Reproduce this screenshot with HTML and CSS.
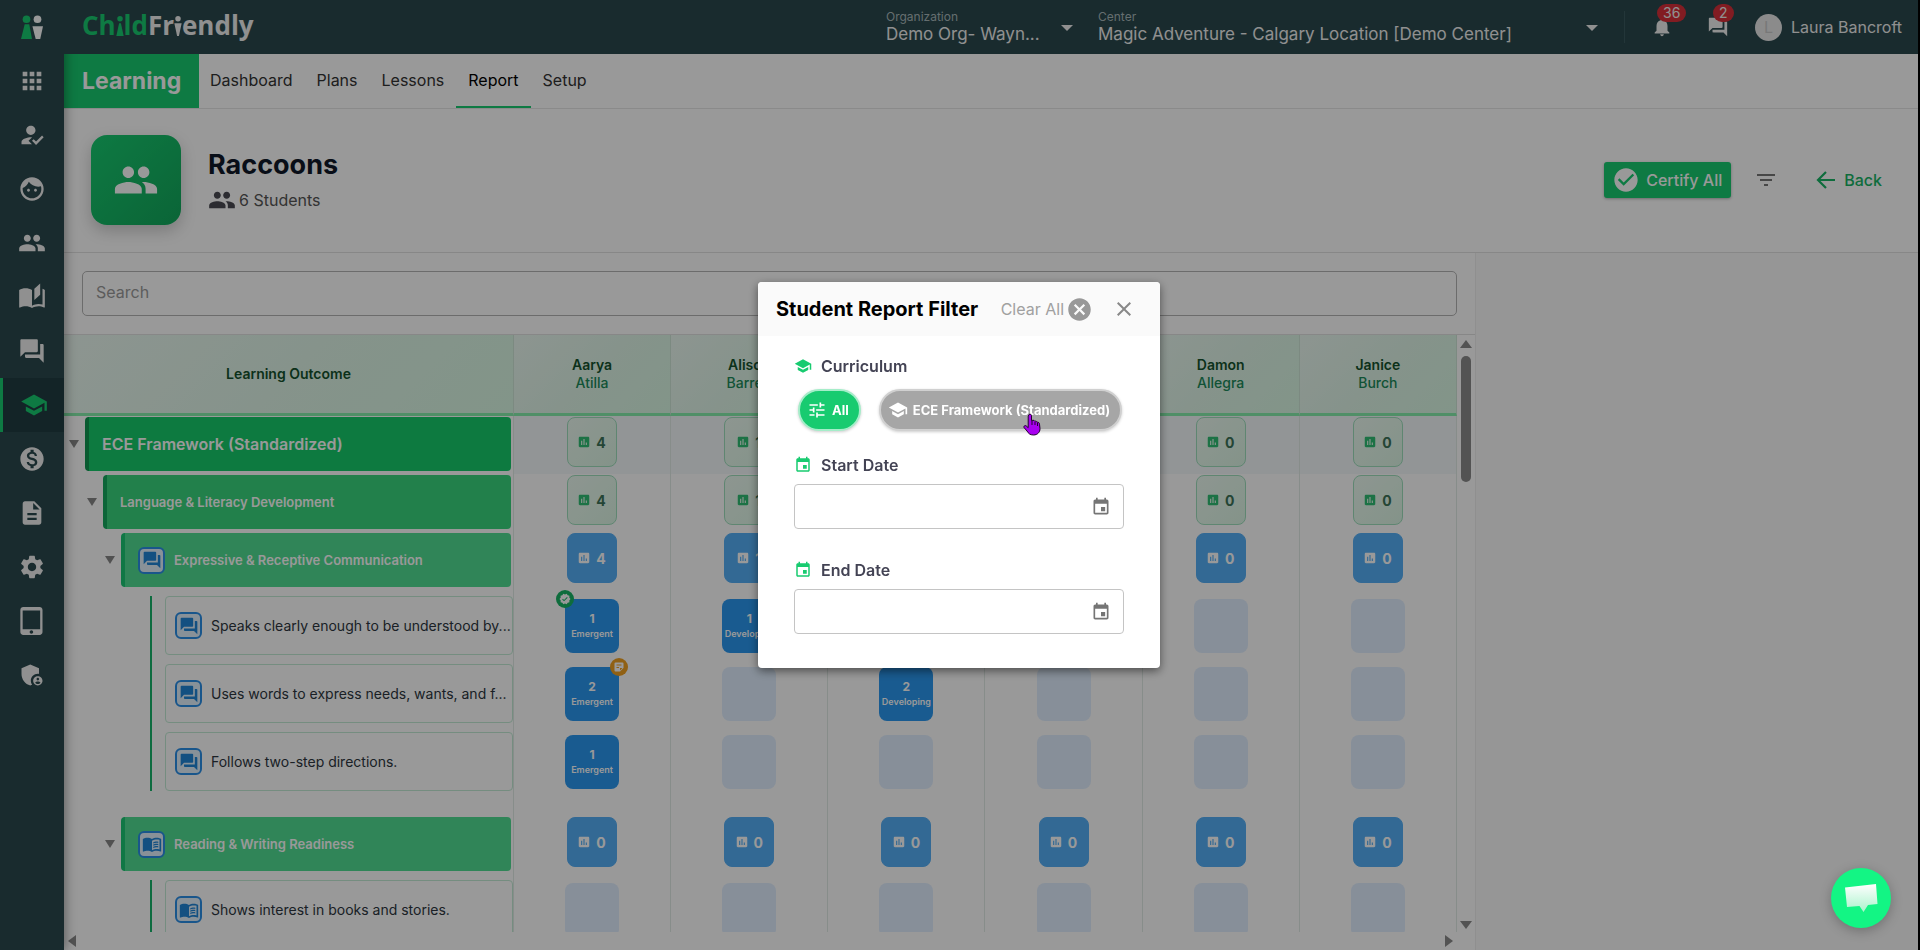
FILE: index.html
```html
<!DOCTYPE html>
<html lang="en">
<head>
    <meta charset="UTF-8">
    <meta name="viewport" content="width=device-width, initial-scale=1.0">
    <title>Learning Report - ChildFriendly</title>
    <link rel="stylesheet" href="styles.css">
</head>
<body>
    <!-- Icon set -->
    <svg class="sprite" aria-hidden="true">
        <symbol id="apps" viewBox="0 0 24 24"><path d="M4 8h4V4H4v4zm6 12h4v-4h-4v4zm-6 0h4v-4H4v4zm0-6h4v-4H4v4zm6 0h4v-4h-4v4zm6-10v4h4V4h-4zm-6 4h4V4h-4v4zm6 6h4v-4h-4v4zm0 6h4v-4h-4v4z"/></symbol>
        <symbol id="attendance" viewBox="0 0 24 24"><path d="M9 17l3-2.94c-.39-.04-.68-.06-1-.06-2.67 0-8 1.34-8 4v2h9l-3-3zm2-5c2.21 0 4-1.79 4-4s-1.79-4-4-4-4 1.79-4 4 1.79 4 4 4M15.47 20.5L12 17l1.4-1.41 2.07 2.08 5.13-5.17 1.4 1.41z"/></symbol>
        <symbol id="face" viewBox="0 0 24 24"><path d="M9 11.75c-.69 0-1.25.56-1.25 1.25s.56 1.25 1.25 1.25 1.25-.56 1.25-1.25-.56-1.25-1.25-1.25zm6 0c-.69 0-1.25.56-1.25 1.25s.56 1.25 1.25 1.25 1.25-.56 1.25-1.25-.56-1.25-1.25-1.25zM12 2C6.48 2 2 6.48 2 12s4.48 10 10 10 10-4.48 10-10S17.52 2 12 2zm0 18c-4.41 0-8-3.59-8-8 0-.29.02-.58.05-.86 2.36-1.05 4.23-2.98 5.21-5.37C11.07 8.33 14.05 10 17.42 10c.78 0 1.53-.09 2.25-.26.21.71.33 1.47.33 2.26 0 4.41-3.59 8-8 8z"/></symbol>
        <symbol id="people" viewBox="0 0 24 24"><path d="M16 11c1.66 0 2.99-1.34 2.99-3S17.66 5 16 5c-1.66 0-3 1.34-3 3s1.34 3 3 3zm-8 0c1.66 0 2.99-1.34 2.99-3S9.66 5 8 5C6.34 5 5 6.34 5 8s1.34 3 3 3zm0 2c-2.33 0-7 1.17-7 3.5V19h14v-2.5c0-2.33-4.67-3.5-7-3.5zm8 0c-.29 0-.62.02-.97.05 1.16.84 1.97 1.97 1.97 3.45V19h6v-2.5c0-2.33-4.67-3.5-7-3.5z"/></symbol>
        <symbol id="stories" viewBox="0 0 24 24"><path d="M19 .5l-5 4.5v9.5l5-4.5V.5zM1 6v14.65c0 .25.25.5.5.5.1 0 .15-.05.25-.05C3.1 20.45 5.05 20 6.5 20c1.95 0 4.05.4 5.5 1.5 1.35-.85 3.8-1.5 5.5-1.5 1.65 0 3.35.3 4.75 1.05.1.05.15.05.25.05.25 0 .5-.25.5-.5V6c-.6-.45-1.25-.75-2-1v13.5c-1.1-.35-2.3-.5-3.5-.5-1.7 0-4.15.65-5.5 1.5V6c-1.45-1.1-3.55-1.5-5.5-1.5S2.45 4.9 1 6z"/></symbol>
        <symbol id="forum" viewBox="0 0 24 24"><path d="M21 6h-2v9H6v2c0 .55.45 1 1 1h11l4 4V7c0-.55-.45-1-1-1zm-4 6V3c0-.55-.45-1-1-1H3c-.55 0-1 .45-1 1v14l4-4h10c.55 0 1-.45 1-1z"/></symbol>
        <symbol id="school" viewBox="0 0 24 24"><path d="M5 13.18v4L12 21l7-3.82v-4L12 17l-7-3.82zM12 3L1 9l11 6 9-4.91V17h2V9L12 3z"/></symbol>
        <symbol id="money" viewBox="0 0 24 24"><path d="M12 2C6.48 2 2 6.48 2 12s4.48 10 10 10 10-4.48 10-10S17.52 2 12 2zm1.41 16.09V20h-2.67v-1.93c-1.71-.36-3.16-1.46-3.27-3.4h1.96c.1 1.05.82 1.87 2.65 1.87 1.96 0 2.4-.98 2.4-1.59 0-.83-.44-1.61-2.67-2.14-2.48-.6-4.18-1.62-4.18-3.67 0-1.72 1.39-2.84 3.11-3.21V4h2.67v1.95c1.86.45 2.79 1.86 2.85 3.39H14.3c-.05-1.11-.64-1.87-2.22-1.87-1.5 0-2.4.68-2.4 1.64 0 .84.65 1.39 2.67 1.91s4.18 1.39 4.18 3.91c-.01 1.83-1.38 2.83-3.12 3.16z"/></symbol>
        <symbol id="document" viewBox="0 0 24 24"><path d="M14 2H6c-1.1 0-1.99.9-1.99 2L4 20c0 1.1.89 2 1.99 2H18c1.1 0 2-.9 2-2V8l-6-6zm2 16H8v-2h8v2zm0-4H8v-2h8v2zm-3-5V3.5L18.5 9H13z"/></symbol>
        <symbol id="settings" viewBox="0 0 24 24"><path d="M19.14 12.94c.04-.3.06-.61.06-.94 0-.32-.02-.64-.07-.94l2.03-1.58c.18-.14.23-.41.12-.61l-1.92-3.32c-.12-.22-.37-.29-.59-.22l-2.39.96c-.5-.38-1.03-.7-1.62-.94l-.36-2.54c-.04-.24-.24-.41-.48-.41h-3.84c-.24 0-.43.17-.47.41l-.36 2.54c-.59.24-1.13.57-1.62.94l-2.39-.96c-.22-.08-.47 0-.59.22L2.74 8.87c-.12.21-.08.47.12.61l2.03 1.58c-.05.3-.09.63-.09.94s.02.64.07.94l-2.03 1.58c-.18.14-.23.41-.12.61l1.92 3.32c.12.22.37.29.59.22l2.39-.96c.5.38 1.03.7 1.62.94l.36 2.54c.05.24.24.41.48.41h3.84c.24 0 .44-.17.47-.41l.36-2.54c.59-.24 1.13-.56 1.62-.94l2.39.96c.22.08.47 0 .59-.22l1.92-3.32c.12-.22.07-.47-.12-.61l-2.01-1.58zM12 15.6c-1.98 0-3.6-1.62-3.6-3.6s1.62-3.6 3.6-3.6 3.6 1.62 3.6 3.6-1.62 3.6-3.6 3.6z"/></symbol>
        <symbol id="tablet" viewBox="0 0 24 24"><path d="M18.5 0h-14C3.12 0 2 1.12 2 2.5v19C2 22.88 3.12 24 4.5 24h14c1.38 0 2.5-1.12 2.5-2.5v-19C21 1.12 19.88 0 18.5 0zm-7 23c-.83 0-1.5-.67-1.5-1.5s.67-1.5 1.5-1.5 1.5.67 1.5 1.5-.67 1.5-1.5 1.5zm7.5-4H4V3h15v16z"/></symbol>
        <symbol id="admin" viewBox="0 0 24 24"><path d="M17 11c.34 0 .67.04 1 .09V6.27L10.5 3 3 6.27v4.91c0 4.54 3.2 8.79 7.5 9.82.55-.13 1.08-.32 1.6-.55-.69-.98-1.1-2.17-1.1-3.45 0-3.31 2.69-6 6-6zM17 13c-2.21 0-4 1.79-4 4s1.79 4 4 4 4-1.79 4-4-1.79-4-4-4zm0 1.38c.62 0 1.12.51 1.12 1.12s-.51 1.12-1.12 1.12-1.12-.51-1.12-1.12.5-1.12 1.12-1.12zm0 5.37c-.93 0-1.74-.46-2.24-1.17.05-.72 1.51-1.08 2.24-1.08s2.19.36 2.24 1.08c-.5.71-1.31 1.17-2.24 1.17z"/></symbol>
        <symbol id="book" viewBox="0 0 24 24"><path d="M21 5c-1.11-.35-2.33-.5-3.5-.5-1.95 0-4.05.4-5.5 1.5-1.45-1.1-3.55-1.5-5.5-1.5S2.45 4.9 1 6v14.65c0 .25.25.5.5.5.1 0 .15-.05.25-.05C3.1 20.45 5.05 20 6.5 20c1.95 0 4.05.4 5.5 1.5 1.35-.85 3.8-1.5 5.5-1.5 1.65 0 3.35.3 4.75 1.05.1.05.15.05.25.05.25 0 .5-.25.5-.5V6c-.6-.45-1.25-.75-2-1zm0 13.5c-1.1-.35-2.3-.5-3.5-.5-1.7 0-4.15.65-5.5 1.5V8c1.35-.85 3.8-1.5 5.5-1.5 1.2 0 2.4.15 3.5.5v11.5z"/><path d="M13.500 9.800c1.300-.6 3.800-1 6-.6v1.500c-2.200-.4-4.500-.1-6 .7zM13.500 12.500c1.300-.6 3.800-1 6-.6v1.500c-2.200-.4-4.500-.1-6 .7zM13.500 15.200c1.300-.6 3.800-1 6-.6v1.500c-2.200-.4-4.500-.1-6 .7z"/></symbol>
        <symbol id="bell" viewBox="0 0 24 24"><path d="M12 22c1.100 0 2-.9 2-2h-4c0 1.100.89 2 2 2zm6-6v-5c0-3.070-1.640-5.640-4.500-6.320V4c0-.83-.67-1.500-1.500-1.500s-1.500.67-1.500 1.500v.68C7.630 5.360 6 7.920 6 11v5l-2 2v1h16v-1l-2-2z"/></symbol>
        <symbol id="check" viewBox="0 0 24 24"><path d="M12 2C6.48 2 2 6.48 2 12s4.48 10 10 10 10-4.48 10-10S17.52 2 12 2zm-2 15l-5-5 1.410-1.410L10 14.170l7.590-7.590L19 8l-9 9z"/></symbol>
        <symbol id="filter" viewBox="0 0 24 24"><path d="M10 18h4v-2h-4v2zM3 6v2h18V6H3zm3 7h12v-2H6v2z"/></symbol>
        <symbol id="back" viewBox="0 0 24 24"><path d="M21 12H4M12 4l-8 8 8 8" fill="none" stroke="currentColor" stroke-width="2.200"/></symbol>
        <symbol id="chart" viewBox="0 0 24 24"><path d="M19 3H5c-1.100 0-2 .9-2 2v14c0 1.100.9 2 2 2h14c1.100 0 2-.9 2-2V5c0-1.100-.9-2-2-2zM9 17H7v-7h2v7zm4 0h-2V7h2v10zm4 0h-2v-4h2v4z"/></symbol>
        <symbol id="event" viewBox="0 0 24 24"><path d="M17 12h-5v5h5v-5zM16 1v2H8V1H6v2H5c-1.110 0-1.990.9-1.990 2L3 19c0 1.100.89 2 2 2h14c1.100 0 2-.9 2-2V5c0-1.100-.9-2-2-2h-1V1h-2zm3 18H5V8h14v11z"/></symbol>
        <symbol id="tune" viewBox="0 0 24 24"><path d="M3 17v2h6v-2H3zM3 5v2h10V5H3zm10 16v-2h8v-2h-8v-2h-2v6h2zM7 9v2H3v2h4v2h2V9H7zm14 4v-2H11v2h10zm-6-4h2V7h4V5h-4V3h-2v6z"/></symbol>
        <symbol id="cancel" viewBox="0 0 24 24"><path d="M12 2C6.470 2 2 6.470 2 12s4.470 10 10 10 10-4.470 10-10S17.530 2 12 2zm5 13.590L15.590 17 12 13.410 8.410 17 7 15.590 10.590 12 7 8.410 8.410 7 12 10.590 15.590 7 17 8.410 13.410 12 17 15.590z"/></symbol>
        <symbol id="close" viewBox="0 0 24 24"><path d="M19 6.410L17.590 5 12 10.590 6.410 5 5 6.410 10.590 12 5 17.590 6.410 19 12 13.410 17.590 19 19 17.590 13.410 12z"/></symbol>
        <symbol id="verified" viewBox="0 0 24 24"><path d="M23 12l-2.440-2.790.34-3.690-3.610-.82-1.890-3.200L12 2.960 8.600 1.500 6.710 4.690 3.100 5.500l.34 3.700L1 12l2.440 2.790-.34 3.700 3.610.82L8.600 22.500l3.400-1.470 3.400 1.460 1.890-3.190 3.610-.82-.34-3.690L23 12zm-12.910 4.720l-3.800-3.810 1.480-1.480 2.320 2.330 5.850-5.870 1.480 1.480-7.330 7.350z"/></symbol>
        <symbol id="note" viewBox="0 0 24 24"><path d="M5 3h14a2 2 0 0 1 2 2v9l-7 7H5a2 2 0 0 1-2-2V5a2 2 0 0 1 2-2zm2 4v2h10V7H7zm0 5v2h5v-2H7zm7 7l5-5h-5v5z"/></symbol>
    </svg>

    <div class="app">
        <nav class="sidebar" aria-label="Main">
            <a class="side-logo" href="#" aria-label="Home">
                <svg viewBox="0 0 24 27"><g fill="#18cb70"><circle cx="6" cy="4.500" r="4.200"/><path d="M4 10h5l3 16H0z"/></g><g fill="#fff"><circle cx="18" cy="4.500" r="4.200"/><path d="M12.500 12H24l-3 14h-5z"/></g></svg>
            </a>
            <a href="#" aria-label="Apps"><svg><use href="#apps"/></svg></a>
            <a href="#" aria-label="Attendance"><svg><use href="#attendance"/></svg></a>
            <a href="#" aria-label="Children"><svg><use href="#face"/></svg></a>
            <a href="#" aria-label="Families"><svg><use href="#people"/></svg></a>
            <a href="#" aria-label="Stories"><svg><use href="#stories"/></svg></a>
            <a href="#" aria-label="Messages"><svg><use href="#forum"/></svg></a>
            <a class="active" href="#" aria-label="Learning"><svg><use href="#school"/></svg></a>
            <a href="#" aria-label="Billing"><svg><use href="#money"/></svg></a>
            <a href="#" aria-label="Documents"><svg><use href="#document"/></svg></a>
            <a href="#" aria-label="Settings"><svg><use href="#settings"/></svg></a>
            <a href="#" aria-label="Kiosk"><svg><use href="#tablet"/></svg></a>
            <a href="#" aria-label="Admin"><svg><use href="#admin"/></svg></a>
        </nav>

        <div class="main">
            <header class="topbar">
                <div class="brand"><span class="brand-green">Ch<span class="figure">i<svg viewBox="0 0 8 24"><circle cx="4" cy="4" r="3"/><path d="M3 9h2l3 14H0z"/></svg></span>ld</span>Fr<span class="figure">i<svg viewBox="0 0 8 24"><circle cx="4" cy="4" r="3"/><path d="M0 9h8l-3 14H3z"/></svg></span>endly</div>
                <div class="picker picker-org">
                    <label for="organization">Organization</label>
                    <select id="organization"><option>Demo Org- Wayn...</option></select>
                </div>
                <div class="picker picker-center">
                    <label for="center">Center</label>
                    <select id="center"><option>Magic Adventure - Calgary Location [Demo Center]</option></select>
                </div>
                <div class="account">
                    <button class="alert" aria-label="Notifications"><svg><use href="#bell"/></svg><span class="badge">36</span></button>
                    <button class="alert" aria-label="Chats"><svg><use href="#forum"/></svg><span class="badge">2</span></button>
                    <button class="user"><span class="avatar">L</span>Laura Bancroft</button>
                </div>
            </header>

            <nav class="tabs" aria-label="Learning">
                <span class="tabs-title">Learning</span>
                <a href="#">Dashboard</a>
                <a href="#">Plans</a>
                <a href="#">Lessons</a>
                <a class="active" href="#">Report</a>
                <a href="#">Setup</a>
            </nav>

            <section class="class-header">
                <div class="class-icon"><svg><use href="#people"/></svg></div>
                <div class="class-info">
                    <h1>Raccoons</h1>
                    <p><svg><use href="#people"/></svg>6 Students</p>
                </div>
                <div class="actions">
                    <button class="certify"><svg><use href="#check"/></svg>Certify All</button>
                    <button class="filter" aria-label="Filter"><svg><use href="#filter"/></svg></button>
                    <a class="back" href="#"><svg><use href="#back"/></svg>Back</a>
                </div>
            </section>

            <div class="content">
                <section class="report">
                    <div class="search"><input type="text" placeholder="Search" aria-label="Search"></div>
                    <div class="grid-area">
                        <div class="table-wrap">
                            <table>
                                <thead>
                                    <tr>
                                        <th class="outcome">Learning Outcome</th>
                                        <th>Aarya<span>Atilla</span></th>
                                        <th>Alison<span>Barrett</span></th>
                                        <th>Brody<span>Lucas</span></th>
                                        <th>Chloe<span>Adams</span></th>
                                        <th>Damon<span>Allegra</span></th>
                                        <th>Janice<span>Burch</span></th>
                                    </tr>
                                </thead>
                                <tbody>
                                    <tr class="group level-1">
                                        <td><div class="row-head"><button class="toggle" aria-label="Collapse"></button><div class="bar">ECE Framework (Standardized)</div></div></td>
                                        <td><div class="count"><svg><use href="#chart"/></svg>4</div></td>
                                        <td><div class="count"><svg><use href="#chart"/></svg>1</div></td>
                                        <td><div class="count"><svg><use href="#chart"/></svg>2</div></td>
                                        <td><div class="count"><svg><use href="#chart"/></svg>0</div></td>
                                        <td><div class="count"><svg><use href="#chart"/></svg>0</div></td>
                                        <td><div class="count"><svg><use href="#chart"/></svg>0</div></td>
                                    </tr>
                                    <tr class="group level-2">
                                        <td><div class="row-head"><button class="toggle" aria-label="Collapse"></button><div class="bar">Language &amp; Literacy Development</div></div></td>
                                        <td><div class="count"><svg><use href="#chart"/></svg>4</div></td>
                                        <td><div class="count"><svg><use href="#chart"/></svg>1</div></td>
                                        <td><div class="count"><svg><use href="#chart"/></svg>2</div></td>
                                        <td><div class="count"><svg><use href="#chart"/></svg>0</div></td>
                                        <td><div class="count"><svg><use href="#chart"/></svg>0</div></td>
                                        <td><div class="count"><svg><use href="#chart"/></svg>0</div></td>
                                    </tr>
                                    <tr class="group level-3">
                                        <td><div class="row-head"><button class="toggle" aria-label="Collapse"></button><div class="bar"><span class="tile"><svg><use href="#forum"/></svg></span>Expressive &amp; Receptive Communication</div></div></td>
                                        <td><div class="count"><svg><use href="#chart"/></svg>4</div></td>
                                        <td><div class="count"><svg><use href="#chart"/></svg>1</div></td>
                                        <td><div class="count"><svg><use href="#chart"/></svg>2</div></td>
                                        <td><div class="count"><svg><use href="#chart"/></svg>0</div></td>
                                        <td><div class="count"><svg><use href="#chart"/></svg>0</div></td>
                                        <td><div class="count"><svg><use href="#chart"/></svg>0</div></td>
                                    </tr>
                                    <tr class="skill">
                                        <td><div class="branch"><div class="skill-box"><span class="tile"><svg><use href="#forum"/></svg></span><span class="skill-name">Speaks clearly enough to be understood by...</span></div></div></td>
                                        <td><div class="score">1<small>Emergent</small><span class="mark mark-ok"><svg><use href="#verified"/></svg></span></div></td>
                                        <td><div class="score">1<small>Developing</small></div></td>
                                        <td><div class="score empty"></div></td>
                                        <td><div class="score empty"></div></td>
                                        <td><div class="score empty"></div></td>
                                        <td><div class="score empty"></div></td>
                                    </tr>
                                    <tr class="skill">
                                        <td><div class="branch"><div class="skill-box"><span class="tile"><svg><use href="#forum"/></svg></span><span class="skill-name">Uses words to express needs, wants, and f...</span></div></div></td>
                                        <td><div class="score">2<small>Emergent</small><span class="mark mark-note"><svg><use href="#note"/></svg></span></div></td>
                                        <td><div class="score empty"></div></td>
                                        <td><div class="score">2<small>Developing</small></div></td>
                                        <td><div class="score empty"></div></td>
                                        <td><div class="score empty"></div></td>
                                        <td><div class="score empty"></div></td>
                                    </tr>
                                    <tr class="skill skill-last">
                                        <td><div class="branch"><div class="skill-box"><span class="tile"><svg><use href="#forum"/></svg></span><span class="skill-name">Follows two-step directions.</span></div></div></td>
                                        <td><div class="score">1<small>Emergent</small></div></td>
                                        <td><div class="score empty"></div></td>
                                        <td><div class="score empty"></div></td>
                                        <td><div class="score empty"></div></td>
                                        <td><div class="score empty"></div></td>
                                        <td><div class="score empty"></div></td>
                                    </tr>
                                    <tr class="group level-3">
                                        <td><div class="row-head"><button class="toggle" aria-label="Collapse"></button><div class="bar"><span class="tile"><svg><use href="#book"/></svg></span>Reading &amp; Writing Readiness</div></div></td>
                                        <td><div class="count"><svg><use href="#chart"/></svg>0</div></td>
                                        <td><div class="count"><svg><use href="#chart"/></svg>0</div></td>
                                        <td><div class="count"><svg><use href="#chart"/></svg>0</div></td>
                                        <td><div class="count"><svg><use href="#chart"/></svg>0</div></td>
                                        <td><div class="count"><svg><use href="#chart"/></svg>0</div></td>
                                        <td><div class="count"><svg><use href="#chart"/></svg>0</div></td>
                                    </tr>
                                    <tr class="skill">
                                        <td><div class="branch"><div class="skill-box"><span class="tile"><svg><use href="#book"/></svg></span><span class="skill-name">Shows interest in books and stories.</span></div></div></td>
                                        <td><div class="score empty"></div></td>
                                        <td><div class="score empty"></div></td>
                                        <td><div class="score empty"></div></td>
                                        <td><div class="score empty"></div></td>
                                        <td><div class="score empty"></div></td>
                                        <td><div class="score empty"></div></td>
                                    </tr>
                                </tbody>
                            </table>
                        </div>
                        <div class="scroll-y"><i class="arrow up"></i><i class="thumb"></i><i class="arrow down"></i></div>
                        <div class="scroll-x"><i class="arrow left"></i><i class="arrow right"></i></div>
                    </div>
                </section>
                <aside class="side-panel"></aside>
            </div>
        </div>
    </div>

    <div class="backdrop">
        <div class="dialog" role="dialog" aria-labelledby="dialog-title">
            <div class="dialog-head">
                <h2 id="dialog-title">Student Report Filter</h2>
                <button class="clear">Clear All<svg><use href="#cancel"/></svg></button>
                <button class="close" aria-label="Close"><svg><use href="#close"/></svg></button>
            </div>
            <form class="dialog-body">
                <div class="field-label"><svg><use href="#school"/></svg>Curriculum</div>
                <div class="chips">
                    <button type="button" class="chip chip-on"><svg><use href="#tune"/></svg>All</button>
                    <button type="button" class="chip"><svg><use href="#school"/></svg>ECE Framework (Standardized)
                        <svg class="pointer" viewBox="0 0 18 23"><path d="M6 1.500c1.300-.8 2.500 0 2.500 1.200v5l1.500-.5c1 0 1.500.5 1.700 1 1.300-.3 2 .2 2.300 1 1.500-.2 2.500.6 2.500 2l.5 4.500c0 3.500-2.500 6.300-6.500 6.300-3.500 0-5-1.500-6.500-4L1 14.500c-.5-1.500 1-2.500 2.200-1.600l2 1.800V3z" fill="#a800f0" stroke="#22002e"/><path d="M9 8v4M12 9v3M14.500 10v3" stroke="#22002e"/></svg>
                    </button>
                </div>
                <label class="field-label" for="start-date"><svg><use href="#event"/></svg>Start Date</label>
                <div class="date"><input type="text" id="start-date"><button type="button" aria-label="Choose start date"><svg><use href="#event"/></svg></button></div>
                <label class="field-label" for="end-date"><svg><use href="#event"/></svg>End Date</label>
                <div class="date"><input type="text" id="end-date"><button type="button" aria-label="Choose end date"><svg><use href="#event"/></svg></button></div>
            </form>
        </div>
    </div>

    <button class="chat" aria-label="Open chat">
        <svg viewBox="0 0 34 30"><defs><linearGradient id="bubble" x1="0" y1="0" x2="0" y2="1"><stop offset="0" stop-color="#fff"/><stop offset="1" stop-color="#a9f3cb"/></linearGradient></defs><path d="M1 4.500L32 1l1.500 20-9.500 1-4.500 7-4-6-12.500 1z" fill="url(#bubble)"/></svg>
    </button>
</body>
</html>
```
FILE: styles.css
```css
* { box-sizing: border-box; }
body { margin: 0; font-family: Inter, "Liberation Sans", sans-serif; font-size: 16px; color: #333; background: #fff; overflow: hidden; }
button, input, select { font: inherit; color: inherit; }
button { border: none; background: none; padding: 0; cursor: pointer; }
a { color: inherit; text-decoration: none; }
h1, h2, p { margin: 0; }
svg { fill: currentColor; flex: none; width: 24px; height: 24px; }
.sprite { display: none; }

.app { display: flex; height: 100vh; border-right: 2px solid #000; }

/* Sidebar */
.sidebar { position: relative; z-index: 2; flex: none; width: 64px; display: flex; flex-direction: column; background: #2a484d; color: #f0f0f0; box-shadow: 2px 0 10px rgba(0,0,0,0.35); }
.sidebar a { display: flex; align-items: center; justify-content: center; height: 54px; border-left: 3px solid transparent; padding-right: 3px; }
.sidebar svg { width: 28px; height: 28px; }
.sidebar .side-logo svg { width: 22px; height: 25px; }
.sidebar .active { color: #18cb70; background: #203c42; border-left-color: #18cb70; padding-right: 0; }

/* Top bar */
.main { flex: 1; min-width: 0; display: flex; flex-direction: column; }
.topbar { position: relative; z-index: 3; flex: none; display: flex; align-items: center; height: 54px; padding: 0 16px 0 18px; background: #2a484d; color: #f0f0f0; }
.brand { margin-right: auto; padding-bottom: 4px; font-family: "Open Sans", sans-serif; font-weight: 700; font-size: 26px; line-height: 1; }
.brand-green { color: #18cb70; }
.figure { position: relative; -webkit-text-fill-color: transparent; }
.figure svg { position: absolute; left: 0; bottom: 6px; width: 8px; height: 22px; }
.picker { position: relative; display: flex; flex-direction: column; }
.picker label { font-size: 12px; line-height: 14px; color: #a9b8ba; }
.picker select { appearance: none; border: none; padding: 0; height: 20px; font-size: 17px; line-height: 20px; background: transparent; outline: none; }
.picker::after { content: ""; position: absolute; right: 0; top: 15px; border: 6px solid transparent; border-top-color: #f0f0f0; border-bottom: none; }
.picker-org { width: 187px; margin-right: 25px; }
.picker-center { width: 500px; margin-right: 26px; }
.account { display: flex; align-items: center; gap: 24px; height: 32px; padding-left: 24px; border-left: 1px solid #3b5a5f; }
.alert { position: relative; display: flex; width: 26px; justify-content: center; }
.alert + .alert { margin-left: 6px; }
.alert svg { width: 22px; height: 22px; }
.badge { position: absolute; left: 8px; top: -12px; min-width: 20px; height: 18px; padding: 0 6px; border-radius: 9px; background: #d9303a; font-size: 14px; line-height: 18px; }
.user { display: flex; align-items: center; gap: 9px; }
.avatar { display: grid; place-items: center; width: 27px; height: 27px; border-radius: 50%; background: #e8e8e8; color: #c8c8c8; }

/* Section tabs */
.tabs { flex: none; display: flex; height: 55px; border-bottom: 1px solid #e6e6e6; }
.tabs-title { display: flex; align-items: center; width: 135px; padding-left: 18px; margin-right: -1px; background: #18cb70; color: #fff; font-size: 23px; font-weight: 700; }
.tabs a { display: flex; align-items: center; padding: 0 12px; border-bottom: 2px solid transparent; }
.tabs .active { color: #000; border-bottom-color: #18cb70; }

/* Class header */
.class-header { flex: none; display: flex; align-items: center; height: 144px; padding: 0 36px 2px 27px; border-bottom: 1px solid #e2e2e2; }
.class-icon { display: grid; place-items: center; width: 90px; height: 90px; border-radius: 16px; background: linear-gradient(135deg, #18cb70, #12a85c); color: #fff; box-shadow: 0 6px 16px rgba(0,0,0,0.2); }
.class-icon svg { width: 46px; height: 46px; }
.class-info { margin-left: 27px; padding-top: 4px; }
.class-info h1 { font-size: 27px; line-height: 36px; color: #101828; }
.class-info p { display: flex; align-items: center; gap: 3px; font-size: 16px; line-height: 34px; color: #555; }
.class-info p svg { width: 28px; height: 28px; color: #4a4a52; }
.actions { display: flex; align-items: center; margin-left: auto; }
.certify { display: flex; align-items: center; gap: 6px; height: 36px; padding: 0 9px 0 8px; border-radius: 3px; background: #18cb70; color: #fff; font-weight: 500; box-shadow: 0 1px 3px rgba(0,0,0,0.3); }
.certify svg { width: 28px; height: 28px; }
.filter { display: flex; margin: 0 36px 0 23px; color: #777; }
.back { display: flex; align-items: center; gap: 6px; color: #18b565; font-weight: 500; }

/* Report area */
.content { flex: 1; min-height: 0; display: flex; }
.report { flex: 1; min-width: 0; display: flex; flex-direction: column; }
.side-panel { flex: none; width: 443px; background: #fafafa; border-left: 1px solid #eee; }
.search { padding: 18px; border-bottom: 1px solid #e2e2e2; }
.search input { display: block; width: 100%; height: 45px; padding: 0 13px 4px; border: 1px solid #b5b5b5; border-radius: 5px; background: #fff; outline: none; }
.search input::placeholder { color: #9a9a9a; opacity: 1; }
.grid-area { flex: 1; min-height: 0; display: grid; grid-template: minmax(0, 1fr) 18px / minmax(0, 1fr) 18px; }
.table-wrap { overflow: hidden; }
.scroll-y { display: flex; flex-direction: column; align-items: center; padding: 5px 0 3px; }
.scroll-x { display: flex; align-items: center; justify-content: space-between; padding: 0 4px; }
.thumb { width: 10px; height: 126px; margin-top: 8px; border-radius: 5px; background: #8a8a8a; }
.arrow { border: 6px solid transparent; }
.up { border-bottom: 8px solid #8a8a8a; border-top: none; }
.down { margin-top: auto; border-top: 8px solid #8a8a8a; border-bottom: none; }
.left { border-right: 8px solid #8a8a8a; border-left: none; }
.right { border-left: 8px solid #8a8a8a; border-right: none; }

table { width: 100%; table-layout: fixed; border-collapse: separate; border-spacing: 0; }
th { height: 81px; padding: 0; border-right: 1px solid #cfe6d8; border-bottom: 3px solid #86efac; background: linear-gradient(135deg, #ebf8f1, #dff6e8 50%, #d9f8e4); color: #14532d; font-size: 14px; line-height: 18px; font-weight: 600; }
th span { display: block; color: #1c8a5a; font-weight: 500; }
th.outcome { width: 450px; }
td { padding: 0; border-right: 1px solid #e2ebe6; vertical-align: top; }
td:first-child { padding-right: 2px; }
.group td { height: 58px; padding-top: 1px; }
.level-3 td { height: 59px; }
.level-1 td + td { background: #f3f8fa; }
.skill td { height: 68px; padding-top: 5px; }
.skill td:first-child { padding-right: 0; }
.skill-last td { height: 89px; }

.row-head { display: flex; align-items: center; }
.level-2 .row-head { padding-left: 18px; }
.level-3 .row-head { padding-left: 36px; }
.toggle { flex: none; width: 21px; padding-left: 5px; }
.toggle::before { content: ""; display: block; width: 0; border: 5px solid transparent; border-top: 8px solid #888; border-bottom: none; }
.bar { flex: 1; display: flex; align-items: center; gap: 9px; height: 54px; padding-left: 13px; border-left: 4px solid #109650; border-radius: 4px; background: #16cb6c; color: #fff; font-weight: 600; }
.level-2 .bar { background: #39d57d; border-left-color: #14a85e; font-size: 13px; }
.level-3 .bar { background: #50de93; border-left-color: #1cc674; font-size: 13px; }
.tile { flex: none; display: grid; place-items: center; width: 27px; height: 27px; border: 2px solid #2b8fe8; border-radius: 6px; background: #e3f2fd; color: #2185d8; }
.tile svg { width: 20px; height: 20px; }

.branch { height: 63px; margin-left: 86px; padding-left: 13px; border-left: 2px solid #18b56c; }
.skill-box { display: flex; align-items: center; gap: 9px; height: 59px; padding-left: 9px; border: 1px solid #c3ecd6; border-radius: 4px; color: #2d3640; font-size: 14px; }
.skill-name { white-space: nowrap; }
.skill + .skill .branch { margin-top: -5px; height: 68px; padding-top: 5px; }
.skill.skill-last .branch { height: 64px; }

.count { display: flex; align-items: center; justify-content: center; gap: 5px; width: 50px; height: 50px; margin: 0 auto; padding-right: 1px; border: 1px solid #9fdfbd; border-radius: 8px; background: linear-gradient(135deg, #ecfaf1, #dcf6e5); color: #3c7459; font-size: 14px; font-weight: 700; }
.count svg { width: 14px; height: 14px; color: #2fbf74; }
.level-3 .count { border-color: #56b0f7; background: #56b0f7; color: #fff; }
.level-3 .count svg { color: #fff; }
.score { position: relative; display: flex; flex-direction: column; align-items: center; justify-content: center; width: 54px; height: 54px; margin: 3px auto 0; border-radius: 8px; background: #2a98f0; color: #fff; font-size: 12px; line-height: 15px; font-weight: 700; }
.score small { font-size: 9px; font-weight: 600; }
.score.empty { background: #e1efff; }
.mark { position: absolute; top: -9px; display: grid; place-items: center; width: 18px; height: 18px; border-radius: 50%; color: #fff; }
.mark svg { width: 12px; height: 12px; }
.mark-ok { left: -9px; background: #18b565; }
.mark-note { right: -9px; background: #f0a020; }

/* Filter dialog */
.backdrop { position: fixed; inset: 0 2px 0 0; z-index: 10; display: flex; align-items: center; justify-content: center; background: rgba(0,0,0,0.4); }
.dialog { width: 402px; border-radius: 4px; background: #fff; overflow: hidden; box-shadow: 0 3px 10px rgba(0,0,0,0.5); }
.dialog-head { display: flex; align-items: center; height: 54px; padding: 0 24px 0 18px; background: #fafafa; }
.dialog-head h2 { margin-right: auto; font-size: 20px; font-weight: 700; color: #000; }
.clear { display: flex; align-items: center; gap: 2px; margin-right: 19px; color: #a0a0a0; }
.clear svg { width: 27px; height: 27px; color: #999; }
.close { display: flex; color: #888; }
.dialog-body { padding: 16px 36px 34px; }
.field-label { display: flex; align-items: center; gap: 9px; height: 27px; font-weight: 600; color: #434354; }
.field-label svg { width: 18px; height: 18px; color: #18cb70; }
.chips { display: flex; gap: 18px; padding: 10px 4px 20px; }
.chip { position: relative; display: flex; align-items: center; gap: 5px; height: 42px; padding: 0 10px 0 7px; border: 2px solid #d0d0d0; border-radius: 21px; background: #a6a6a6; color: #fff; font-size: 13px; font-weight: 700; white-space: nowrap; box-shadow: 0 1px 3px rgba(0,0,0,0.2); }
.chip svg { width: 20px; height: 20px; }
.chip-on { background: #18cb70; border-color: #a5edc9; }
.chip .pointer { position: absolute; left: 142px; top: 22px; width: 18px; height: 23px; }
.date { position: relative; display: flex; margin: 6px 0 27px; }
.date input { width: 100%; height: 45px; padding: 0 50px 0 14px; border: 1px solid #c4c4c4; border-radius: 4px; background: #fff; outline: none; }
.date button { position: absolute; right: 13px; top: 13px; display: flex; color: #757575; }
.date button svg { width: 20px; height: 20px; }
.date:last-child { margin-bottom: 0; }

/* Chat launcher */
.chat { position: fixed; right: 29px; bottom: 22px; z-index: 11; display: grid; place-items: center; width: 60px; height: 60px; border-radius: 50%; background: #13f584; box-shadow: 0 3px 12px rgba(0,0,0,0.25); }
.chat svg { width: 34px; height: 30px; }
```
